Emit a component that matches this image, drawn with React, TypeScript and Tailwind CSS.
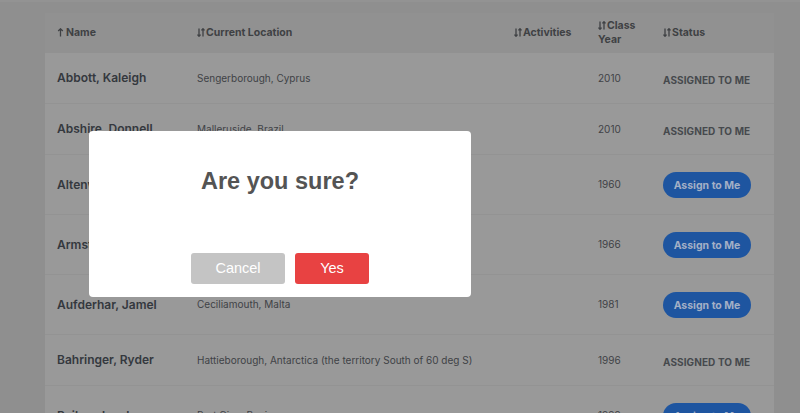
import React from "react";

type Row = { name: string; loc: string; year: string; assigned: boolean };

const rows: Row[] = [
  { name: "Abbott, Kaleigh", loc: "Sengerborough, Cyprus", year: "2010", assigned: true },
  { name: "Abshire, Donnell", loc: "Malleruside, Brazil", year: "2010", assigned: true },
  { name: "Altenwerth, Liam", loc: "North Elmira, Chile", year: "1960", assigned: false },
  { name: "Armstrong, Mateo", loc: "Lake Carmen, Peru", year: "1966", assigned: false },
  { name: "Aufderhar, Jamel", loc: "Ceciliamouth, Malta", year: "1981", assigned: false },
  { name: "Bahringer, Ryder", loc: "Hattieborough, Antarctica (the territory South of 60 deg S)", year: "1996", assigned: true },
  { name: "Bailey, Jacob", loc: "Port Gina, Benin", year: "1999", assigned: false },
];

function SortBoth() {
  return (
    <svg width="8" height="9" viewBox="0 0 8 9" className="inline-block mr-[1px] -mt-[2px]" fill="none" stroke="#3f4144" strokeWidth="1.3">
      <path d="M2 0.5V8.3M0.4 6.6L2 8.3L3.6 6.6" />
      <path d="M6 8.5V0.7M4.4 2.4L6 0.7L7.6 2.4" />
    </svg>
  );
}

function SortUp() {
  return (
    <svg width="7" height="9" viewBox="0 0 7 9" className="inline-block mr-[2px] -mt-[2px]" fill="none" stroke="#3f4144" strokeWidth="1.3">
      <path d="M3.5 8.5V0.8M1.2 3L3.5 0.8L5.8 3" />
    </svg>
  );
}

const grid = "grid grid-cols-[140px_317px_84px_65px_123px]";

export default function App() {
  return (
    <div className="relative w-[800px] h-[413px] overflow-hidden bg-[#8f8f8f]" style={{ fontFamily: "Inter, 'Noto Sans', sans-serif" }}>
      <div className="h-[2px] bg-[#939393]" />
      <div className="ml-[45px] mt-[11px] w-[729px] bg-[#999999]">
        <div className={`${grid} h-[40px] items-center bg-[#919191] text-[10.5px] font-bold text-[#3f4144] leading-[14px]`}>
          <div className="pl-3"><SortUp />Name</div>
          <div className="pl-3"><SortBoth />Current Location</div>
          <div className="pl-3"><SortBoth />Activities</div>
          <div className="pl-3 w-[50px]"><SortBoth />Class Year</div>
          <div className="pl-3"><SortBoth />Status</div>
        </div>
        {rows.map((r) => (
          <div key={r.name} className={`${grid} items-center border-b border-[#939393] ${r.assigned ? "h-[51px]" : "h-[60px]"}`}>
            <div className="pl-3 text-[12px] font-semibold text-[#34383e] whitespace-nowrap">{r.name}</div>
            <div className="pl-3 text-[10px] text-[#404246] whitespace-nowrap">{r.loc}</div>
            <div />
            <div className="pl-3 text-[10px] text-[#404246]">{r.year}</div>
            <div className="pl-3">
              {r.assigned ? (
                <span className="text-[10px] font-bold text-[#46494d] tracking-[0.1px]">ASSIGNED TO ME</span>
              ) : (
                <span className="inline-flex items-center justify-center w-[88px] h-[26px] rounded-full bg-[#1e55a0] text-[10.5px] font-bold text-[#a3b0c6]">Assign to Me</span>
              )}
            </div>
          </div>
        ))}
      </div>

      <div className="absolute left-[89px] top-[131px] w-[382px] h-[166px] bg-white rounded-[4px] flex flex-col items-center" style={{ fontFamily: "'Liberation Sans', Arial, sans-serif" }}>
        <div className="mt-[36px] text-[23.5px] leading-[28px] font-bold text-[#545454]">Are you sure?</div>
        <div className="mt-[58px] flex gap-[10px]">
          <button className="w-[94px] h-[31px] rounded-[3px] bg-[#c4c4c4] text-white text-[14.5px]">Cancel</button>
          <button className="w-[74px] h-[31px] rounded-[3px] bg-[#e84242] text-white text-[14.5px]">Yes</button>
        </div>
      </div>
    </div>
  );
}
